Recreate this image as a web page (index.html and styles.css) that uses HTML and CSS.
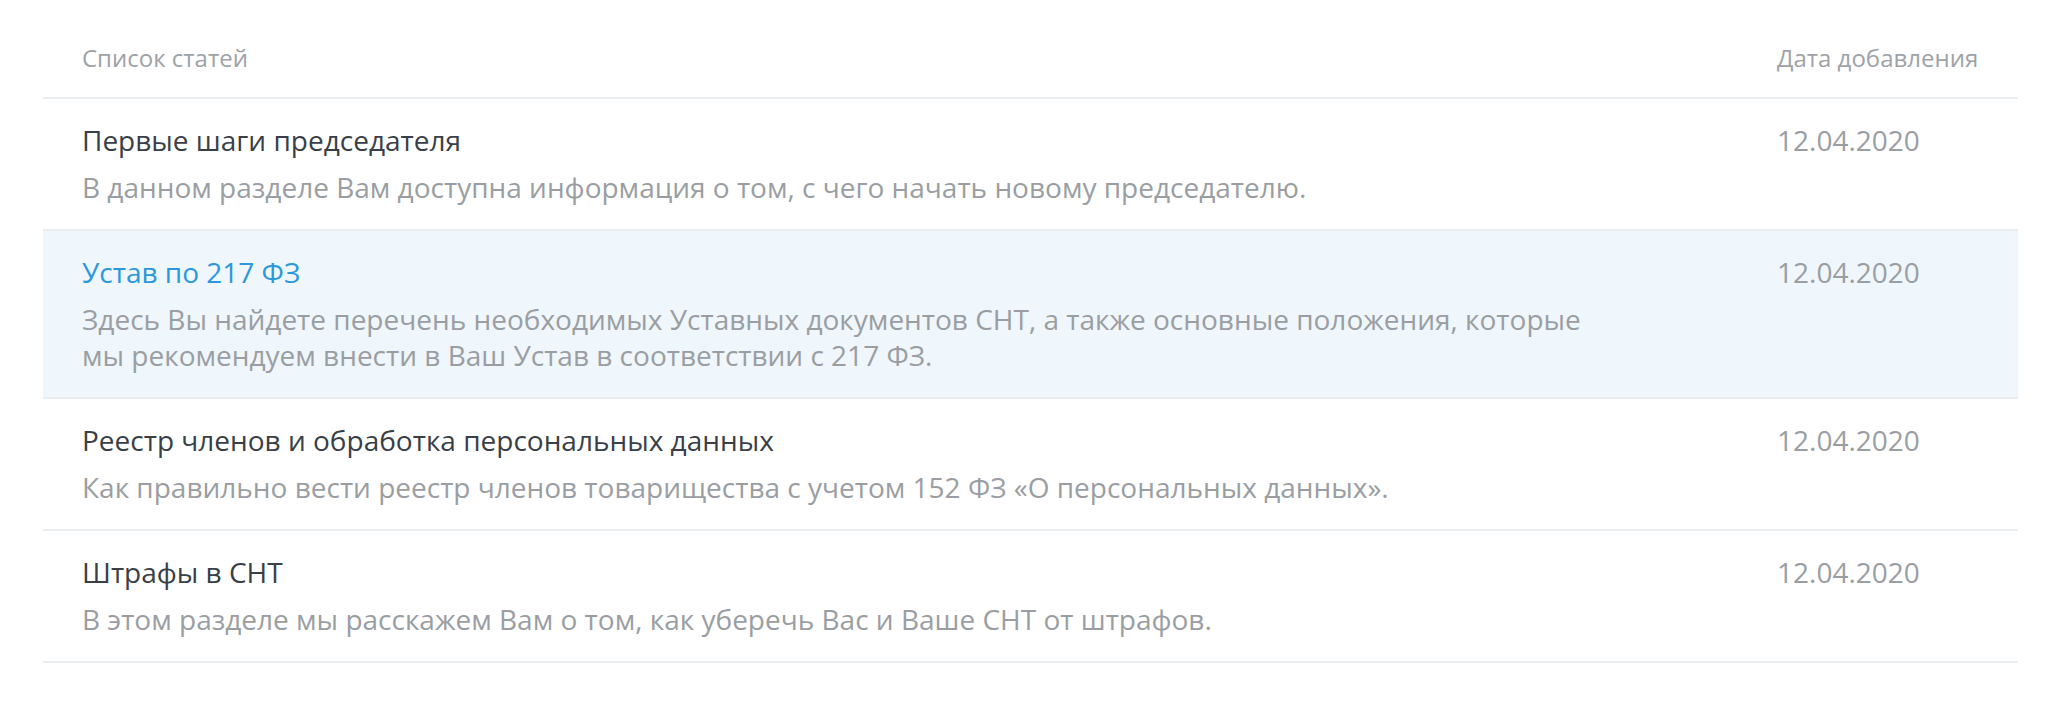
FILE: index.html
```html
<!DOCTYPE html>
<html lang="ru">
<head>
<meta charset="utf-8">
<title>Список статей</title>
<link rel="stylesheet" href="styles.css">
</head>
<body>
<div class="list">
  <div class="list-head">
    <div class="col-main">Список статей</div>
    <div class="col-date">Дата добавления</div>
  </div>
  <div class="item">
    <div class="col-main">
      <div class="item-title">Первые шаги председателя</div>
      <div class="item-desc">В данном разделе Вам доступна информация о том, с чего начать новому председателю.</div>
    </div>
    <div class="col-date item-date">12.04.2020</div>
  </div>
  <div class="item item-active">
    <div class="col-main">
      <div class="item-title">Устав по 217 ФЗ</div>
      <div class="item-desc">Здесь Вы найдете перечень необходимых Уставных документов СНТ, а также основные положения, которые мы рекомендуем внести в Ваш Устав в соответствии с 217 ФЗ.</div>
    </div>
    <div class="col-date item-date">12.04.2020</div>
  </div>
  <div class="item">
    <div class="col-main">
      <div class="item-title">Реестр членов и обработка персональных данных</div>
      <div class="item-desc">Как правильно вести реестр членов товарищества с учетом 152 ФЗ «О персональных данных».</div>
    </div>
    <div class="col-date item-date">12.04.2020</div>
  </div>
  <div class="item">
    <div class="col-main">
      <div class="item-title">Штрафы в СНТ</div>
      <div class="item-desc">В этом разделе мы расскажем Вам о том, как уберечь Вас и Ваше СНТ от штрафов.</div>
    </div>
    <div class="col-date item-date">12.04.2020</div>
  </div>
</div>
</body>
</html>
```

FILE: styles.css
```css
html, body {
  margin: 0;
  padding: 0;
  background: #ffffff;
}

body {
  font-family: "Open Sans", "Noto Sans", sans-serif;
}

.list {
  margin-left: 43px;
  width: 1975px;
}

.list-head,
.item {
  display: grid;
  grid-template-columns: 1515px 201px;
  justify-content: space-between;
  padding-left: 39px;
  padding-right: 40px;
  border-bottom: 2px solid #e9edf1;
}

.col-date {
  white-space: nowrap;
}

.list-head {
  padding-top: 41px;
  padding-bottom: 22px;
  font-size: 24px;
  line-height: 34px;
  color: #9ea2a7;
}

.item {
  padding-top: 22px;
  padding-bottom: 24px;
  font-size: 28px;
}

.item-active {
  background: #eff6fc;
}

.item-title {
  line-height: 38px;
  color: #3a3f47;
}

.item-active .item-title {
  color: #2b98de;
}

.item-desc {
  margin-top: 10px;
  line-height: 36px;
  color: #9a9ea3;
}

.item-date {
  line-height: 38px;
  color: #9a9ea3;
}
```
